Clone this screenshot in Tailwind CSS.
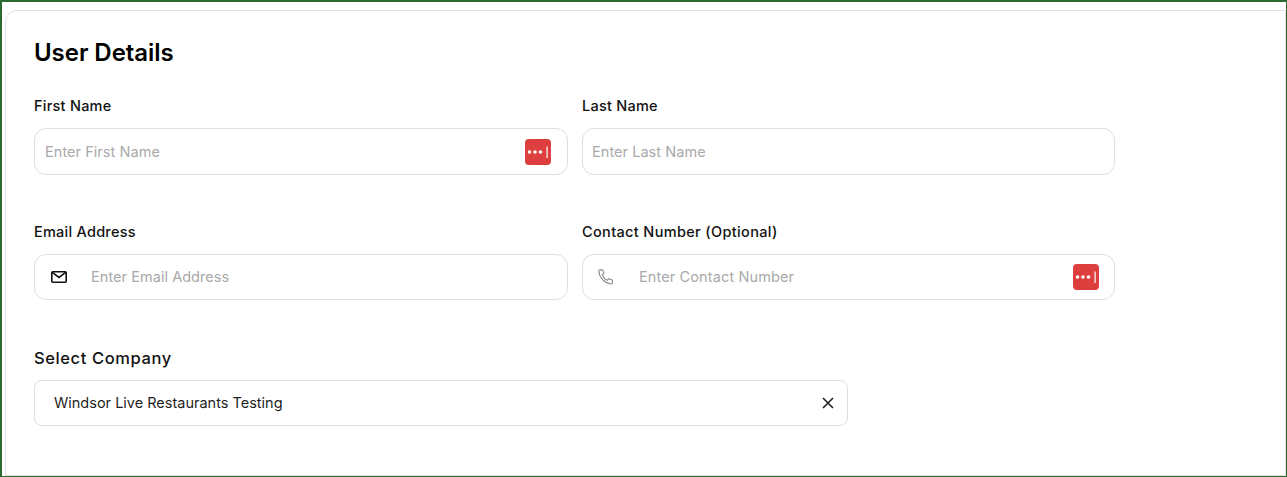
<!DOCTYPE html>
<html lang="en">
<head>
    <meta charset="UTF-8">
    <title>User Details</title>
    <script src="https://cdn.jsdelivr.net/npm/@tailwindcss/browser@4"></script>
</head>
<body class="bg-white font-['Inter',sans-serif]">
    <div class="h-[477px] overflow-hidden border-t-2 border-r border-b border-l-2 border-[#2d6a2f] pt-[8px] pl-[3px]">
        <div class="h-[466px] rounded-tl-xl border border-[#e0e0e0] bg-white pt-[27px] pl-[28px]">
            <h1 class="h-[30px] text-[24px] leading-[30px] font-semibold tracking-[-0.05px] text-black">User Details</h1>

            <div class="mt-[28px] grid w-[1081px] grid-cols-[534px_533px] gap-x-[14px]">
                <!-- First Name -->
                <div class="h-[126px]">
                    <label class="block h-[20px] text-[14.5px] leading-[20px] font-[450] tracking-[0.25px] text-[#111]">First Name</label>
                    <div class="mt-[12px] flex h-[47px] items-center rounded-xl border border-[#dedede] pr-[16px] pl-[10px]">
                        <span class="flex-1 text-[14.5px] tracking-[0.05px] text-[#a9a9a9]">Enter First Name</span>
                        <div class="h-[26px] w-[26px] rounded-[4px] bg-[#dc3f3d]">
                            <svg width="26" height="26" viewBox="0 0 26 26"><circle cx="4.500" cy="13" r="1.800" fill="#fff"/><circle cx="10" cy="13" r="1.800" fill="#fff"/><circle cx="15.500" cy="13" r="1.800" fill="#fff"/><rect x="21.500" y="7.500" width="1.200" height="11.500" fill="#fff"/></svg>
                        </div>
                    </div>
                </div>
                <!-- Last Name -->
                <div class="h-[126px]">
                    <label class="block h-[20px] text-[14.5px] leading-[20px] font-[450] tracking-[0.25px] text-[#111]">Last Name</label>
                    <div class="mt-[12px] flex h-[47px] items-center rounded-xl border border-[#dedede] pl-[9px]">
                        <span class="text-[14.5px] tracking-[0.05px] text-[#a9a9a9]">Enter Last Name</span>
                    </div>
                </div>
                <!-- Email -->
                <div class="h-[126px]">
                    <label class="block h-[20px] text-[14.5px] leading-[20px] font-[450] tracking-[0.25px] text-[#111]">Email Address</label>
                    <div class="mt-[12px] flex h-[46px] items-center rounded-xl border border-[#dedede] pl-[16px]">
                        <svg class="w-[16px] shrink-0" width="16" height="12" viewBox="0 0 16 12" fill="none" stroke="#111" stroke-width="1.600"><rect x="0.800" y="0.800" width="14.400" height="10.400" rx="1"/><path d="M1 1.200 8 6.500l7-5.300"/></svg>
                        <span class="ml-[24px] text-[14.5px] tracking-[0.05px] text-[#a9a9a9]">Enter Email Address</span>
                    </div>
                </div>
                <!-- Contact -->
                <div class="h-[126px]">
                    <label class="block h-[20px] text-[14.5px] leading-[20px] font-[450] tracking-[0.35px] text-[#111]">Contact Number (Optional)</label>
                    <div class="mt-[12px] flex h-[46px] items-center rounded-xl border border-[#dedede] pr-[15px] pl-[14px]">
                        <svg class="shrink-0" width="18" height="18" viewBox="0 0 24 24" fill="none" stroke="#888" stroke-width="1.400" stroke-linecap="round" stroke-linejoin="round"><path d="M4 2.500h3.600l1.600 4.600-2.200 1.900c1.200 3.300 3.600 6 6.800 7.500l1.900-2.300 4.800 1.800v3.700c0 1-.8 1.700-1.800 1.600C10.400 20.600 3.200 13.200 2.400 4.300 2.300 3.300 3 2.500 4 2.500Z"/></svg>
                        <span class="ml-[24px] flex-1 text-[14.5px] tracking-[0.12px] text-[#a9a9a9]">Enter Contact Number</span>
                        <div class="h-[26px] w-[26px] rounded-[4px] bg-[#dc3f3d]">
                            <svg width="26" height="26" viewBox="0 0 26 26"><circle cx="4.500" cy="13" r="1.800" fill="#fff"/><circle cx="10" cy="13" r="1.800" fill="#fff"/><circle cx="15.500" cy="13" r="1.800" fill="#fff"/><rect x="21.500" y="7.500" width="1.200" height="11.500" fill="#fff"/></svg>
                        </div>
                    </div>
                </div>
            </div>

            <!-- Company -->
            <div class="w-[814px]">
                <label class="block h-[20px] text-[16.5px] leading-[20px] font-[450] tracking-[0.6px] text-[#111]">Select Company</label>
                <div class="mt-[12px] flex h-[46px] items-center justify-between rounded-lg border border-[#dedede] pr-[12px] pl-[19px]">
                    <span class="text-[14.5px] text-[#1f1f1f]">Windsor Live Restaurants Testing</span>
                    <svg width="14" height="14" viewBox="0 0 14 14" fill="none" stroke="#222" stroke-width="1.600"><path d="M2 2l10 10M12 2 2 12"/></svg>
                </div>
            </div>
        </div>
    </div>
</body>
</html>
